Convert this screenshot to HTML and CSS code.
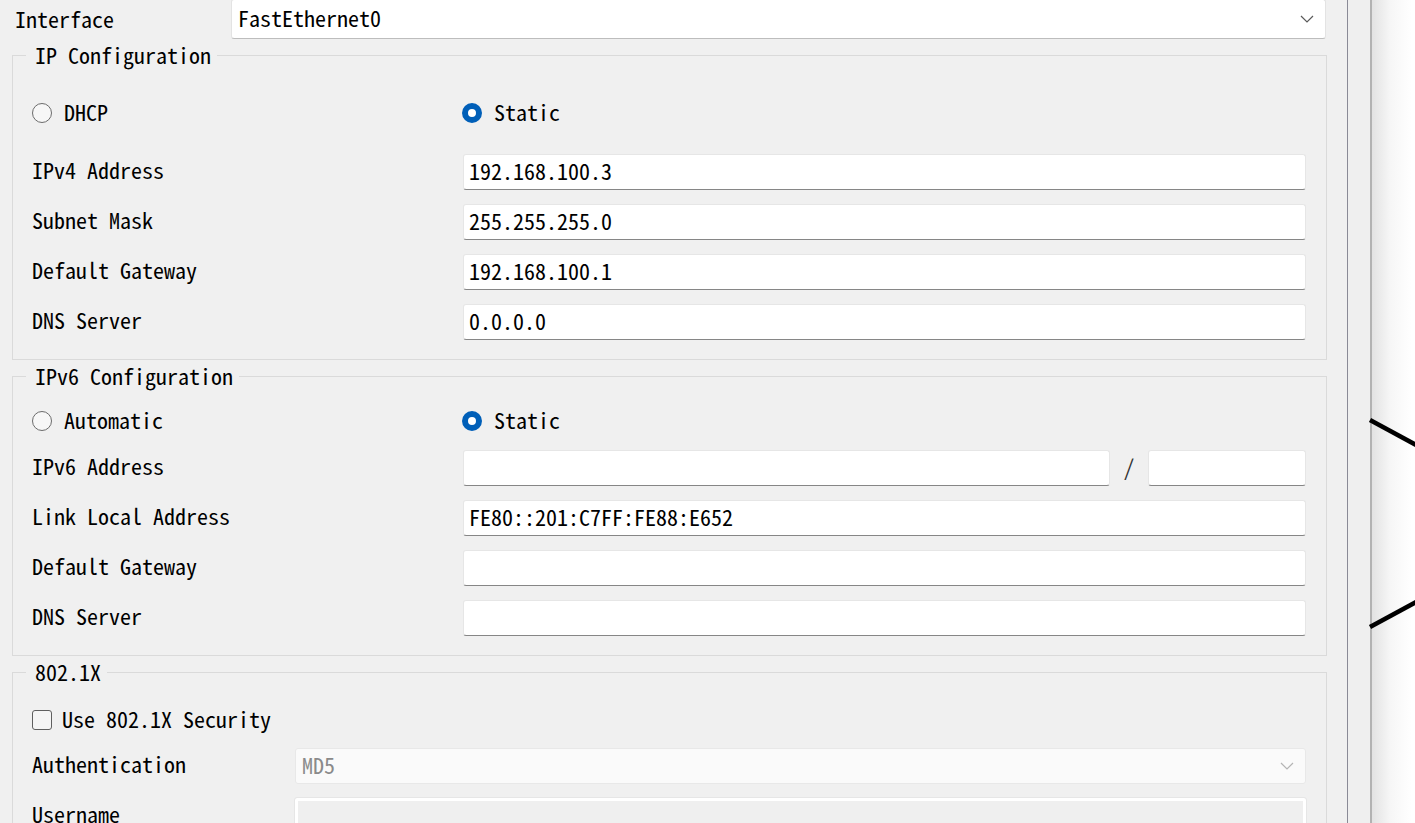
FILE: index.html
```html
<!DOCTYPE html>
<html lang="en">
<head>
<meta charset="utf-8">
<title>PC Config</title>
<link rel="stylesheet" href="styles.css">
</head>
<body>
<div class="app">
  <main class="panel">
    <div class="iface-row">
      <span class="iface-label">Interface</span>
      <div class="select iface-select">
        <span class="txt">FastEthernet0</span>
        <svg class="chev" width="14" height="8" viewBox="0 0 14 8"><path d="M1 1 L7 7 L13 1" fill="none" stroke="#5a5a5a" stroke-width="1.2"/></svg>
      </div>
    </div>

    <fieldset class="group group-ip">
      <legend>IP Configuration</legend>
      <div class="grid radio-row ip-radio">
        <label class="radio"><span class="radio-dot"></span><span class="txt">DHCP</span></label>
        <label class="radio"><span class="radio-dot on"></span><span class="txt">Static</span></label>
      </div>
      <div class="rows">
        <div class="grid field"><span class="label">IPv4 Address</span><div class="input">192.168.100.3</div></div>
        <div class="grid field"><span class="label">Subnet Mask</span><div class="input">255.255.255.0</div></div>
        <div class="grid field"><span class="label">Default Gateway</span><div class="input">192.168.100.1</div></div>
        <div class="grid field"><span class="label">DNS Server</span><div class="input">0.0.0.0</div></div>
      </div>
    </fieldset>

    <fieldset class="group group-v6">
      <legend>IPv6 Configuration</legend>
      <div class="grid radio-row v6-radio">
        <label class="radio"><span class="radio-dot"></span><span class="txt">Automatic</span></label>
        <label class="radio"><span class="radio-dot on"></span><span class="txt">Static</span></label>
      </div>
      <div class="rows">
        <div class="grid field"><span class="label">IPv6 Address</span>
          <div class="split">
            <div class="input"></div>
            <span class="slash">/</span>
            <div class="input prefix"></div>
          </div>
        </div>
        <div class="grid field"><span class="label">Link Local Address</span><div class="input">FE80::201:C7FF:FE88:E652</div></div>
        <div class="grid field"><span class="label">Default Gateway</span><div class="input"></div></div>
        <div class="grid field"><span class="label">DNS Server</span><div class="input"></div></div>
      </div>
    </fieldset>

    <fieldset class="group group-dot1x">
      <legend>802.1X</legend>
      <label class="check-row"><span class="checkbox"></span><span class="txt">Use 802.1X Security</span></label>
      <div class="grid2 field auth-row"><span class="label">Authentication</span>
        <div class="select disabled-select"><span class="txt">MD5</span>
          <svg class="chev" width="14" height="8" viewBox="0 0 14 8"><path d="M1 1 L7 7 L13 1" fill="none" stroke="#b4b4b4" stroke-width="1.2"/></svg>
        </div>
      </div>
      <div class="grid2 field user-row"><span class="label">Username</span><div class="input disabled-input"></div></div>
    </fieldset>
  </main>
  <div class="divider"></div>
  <div class="gutter"></div>
  <div class="canvas">
    <svg class="links" width="45" height="823" viewBox="0 0 45 823">
      <line x1="-2" y1="420" x2="46" y2="446" stroke="#000" stroke-width="4.5"/>
      <line x1="-2" y1="627" x2="46" y2="601" stroke="#000" stroke-width="4.5"/>
    </svg>
  </div>
</div>
</body>
</html>
```
FILE: styles.css
```css
html, body {
  margin: 0;
  padding: 0;
  background: #f0f0f0;
}
body {
  font-family: "Noto Sans Mono CJK SC", "Liberation Mono", monospace;
  font-size: 22px;
  color: #000;
  overflow: hidden;
}
.app {
  display: flex;
  width: 1415px;
  height: 823px;
  overflow: hidden;
}
.panel {
  width: 1347px;
  flex: none;
  padding-left: 12px;
  box-sizing: border-box;
}
.iface-row {
  display: flex;
  align-items: center;
  height: 39px;
}
.iface-label {
  width: 216px;
  padding-left: 3px;
  padding-bottom: 4px;
}
.txt {
  padding-bottom: 4px;
}
.select {
  display: flex;
  align-items: center;
  justify-content: space-between;
  box-sizing: border-box;
  background: #fff;
  border: 1px solid #e3e3e3;
  border-bottom-color: #bdbdbd;
  border-radius: 3px;
}
.iface-select {
  width: 1095px;
  height: 40px;
  margin-top: -1px;
  padding: 0 11px 0 6px;
}
.group {
  width: 1315px;
  box-sizing: border-box;
  margin: 0;
  border: 1px solid #dadada;
  padding: 0 20px 20px 19px;
  min-inline-size: 0;
}
.group legend {
  line-height: 22px;
  padding: 0 6px 2px 9px;
  margin-left: -6px;
}
.group-ip { margin-top: 4px; padding-top: 28px; }
.group-v6 { margin-top: 4px; padding-top: 15px; }
.group-dot1x { margin-top: 4px; padding-top: 18px; }

.grid {
  display: grid;
  grid-template-columns: 431px 1fr;
  align-items: center;
}
.grid2 {
  display: grid;
  grid-template-columns: 263px 1fr;
  align-items: center;
}
.label {
  padding-bottom: 6px;
}
.radio-row { height: 36px; }
.ip-radio { margin-bottom: 22px; }
.v6-radio { margin-bottom: 10px; }
.radio {
  display: flex;
  align-items: center;
  gap: 12px;
}
.radio-dot {
  width: 20px;
  height: 20px;
  box-sizing: border-box;
  border-radius: 50%;
  border: 1px solid #6c6c6c;
  background: #f7f7f7;
}
.radio-dot.on {
  border: 6px solid #005fb8;
  background: #fff;
  margin-left: -1px;
}
.rows {
  display: flex;
  flex-direction: column;
  gap: 14px;
}
.field { height: 36px; }
.input {
  height: 36px;
  box-sizing: border-box;
  background: #fff;
  border: 1px solid #e6e6e6;
  border-bottom: 1px solid #868686;
  border-radius: 3px;
  padding: 0 5px 4px;
  display: flex;
  align-items: center;
}
.split {
  display: flex;
  align-items: center;
}
.split .input:first-child { flex: 1; }
.slash {
  width: 38px;
  text-align: center;
  color: #333;
  padding-bottom: 4px;
}
.prefix { width: 158px; }

.check-row {
  display: flex;
  align-items: center;
  gap: 10px;
  height: 36px;
}
.checkbox {
  width: 20px;
  height: 20px;
  box-sizing: border-box;
  border: 1px solid #5f5f5f;
  border-radius: 3px;
  background: #f5f5f5;
}
.auth-row { margin-top: 9px; }
.disabled-select {
  height: 36px;
  background: #fafafa;
  border: 1px solid #e8e8e8;
  color: #8a8a8a;
  padding: 0 11px 0 6px;
}
.user-row { margin-top: 14px; }
.disabled-input {
  border: 3px solid #fff;
  outline: 1px solid #e6e6e6;
  background: #efefef;
  border-radius: 2px;
}

.divider {
  width: 1px;
  flex: none;
  background: #8a8a96;
}
.gutter {
  width: 22px;
  flex: none;
  background: #efefef;
}
.canvas {
  flex: 1;
  position: relative;
  border-left: 2px solid #b2b2b2;
  background: linear-gradient(to right, #e2e2e2, #f6f6f6 18px, #ffffff 40px);
}
.links {
  position: absolute;
  left: 0;
  top: 0;
  overflow: visible;
}
```
